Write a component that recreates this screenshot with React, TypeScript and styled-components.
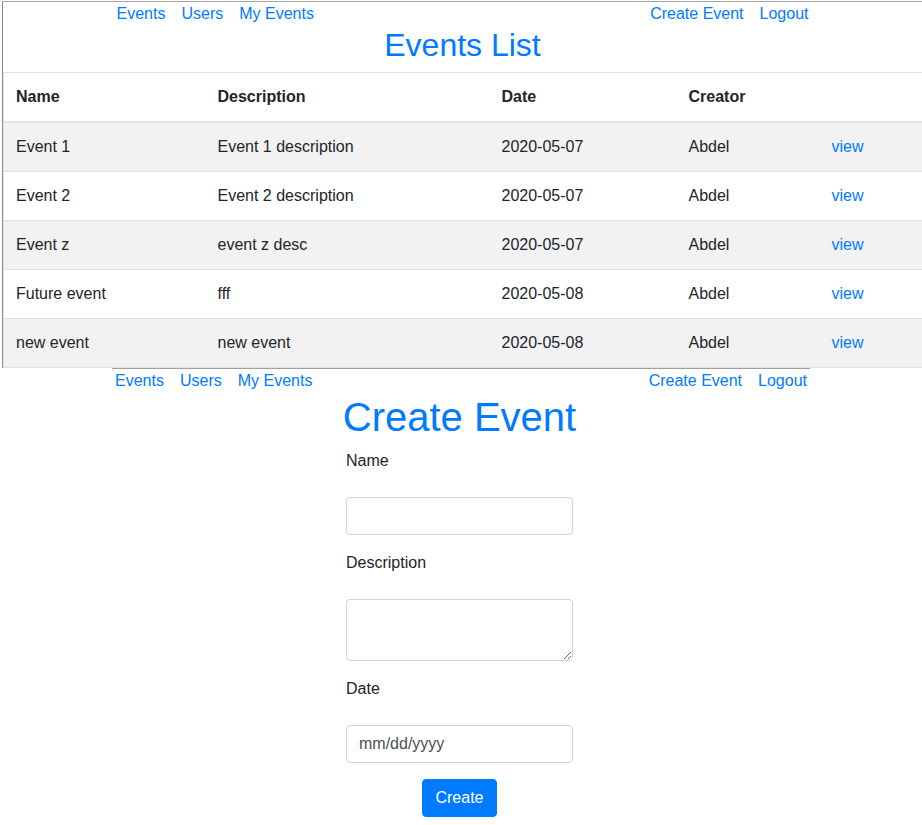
import {FC} from "react";
import styled, {createGlobalStyle} from "styled-components";

interface IEvent {
    name: string;
    description: string;
    date: string;
    creator: string;
}

const events: IEvent[] = [
    {name: 'Event 1', description: 'Event 1 description', date: '2020-05-07', creator: 'Abdel'},
    {name: 'Event 2', description: 'Event 2 description', date: '2020-05-07', creator: 'Abdel'},
    {name: 'Event z', description: 'event z desc', date: '2020-05-07', creator: 'Abdel'},
    {name: 'Future event', description: 'fff', date: '2020-05-08', creator: 'Abdel'},
    {name: 'new event', description: 'new event', date: '2020-05-08', creator: 'Abdel'},
]

const columns = [202, 284, 187, 143, 103]

const Menu: FC<{ lined?: boolean }> = ({lined}) => (
    <Nav $lined={lined}>
        <NavGroup>
            <NavLink href="#">Events</NavLink>
            <NavLink href="#">Users</NavLink>
            <NavLink href="#">My Events</NavLink>
        </NavGroup>
        <NavGroup>
            <NavLink href="#">Create Event</NavLink>
            <NavLink href="#">Logout</NavLink>
        </NavGroup>
    </Nav>
)

export default function App() {
    return (
        <>
            <GlobalStyle/>
            <Frame>
                <Menu/>
                <Title $size={32}>Events List</Title>
                <Table>
                    <colgroup>
                        {columns.map((w, i) => <col key={i} style={{width: w}}/>)}
                    </colgroup>
                    <thead>
                    <tr>
                        <Th>Name</Th>
                        <Th>Description</Th>
                        <Th>Date</Th>
                        <Th>Creator</Th>
                        <Th/>
                    </tr>
                    </thead>
                    <tbody>
                    {events.map((e, i) => (
                        <Row key={e.name} $striped={i % 2 === 0}>
                            <Td>{e.name}</Td>
                            <Td>{e.description}</Td>
                            <Td>{e.date}</Td>
                            <Td>{e.creator}</Td>
                            <Td><ViewLink href="#">view</ViewLink></Td>
                        </Row>
                    ))}
                    </tbody>
                </Table>
            </Frame>
            <Menu lined/>
            <Content>
                <Title $size={40}>Create Event</Title>
                <Form onSubmit={e => e.preventDefault()}>
                    <Field>
                        <Label htmlFor="name">Name</Label>
                        <Input id="name" type="text"/>
                    </Field>
                    <Field>
                        <Label htmlFor="description">Description</Label>
                        <TextArea id="description" rows={2}/>
                    </Field>
                    <Field>
                        <Label htmlFor="date">Date</Label>
                        <Input id="date" type="text" placeholder="mm/dd/yyyy"/>
                    </Field>
                    <Button type="submit">Create</Button>
                </Form>
            </Content>
        </>
    )
}

const GlobalStyle = createGlobalStyle`
  *, *::before, *::after {
    box-sizing: border-box;
  }

  body {
    margin: 0;
    background: #fff;
    color: #212529;
    font-family: "Liberation Sans", Arial, sans-serif;
    font-size: 16px;
    line-height: 1.5;
  }
`

const Frame = styled.div`
  margin: 1px 0 0 2px;
  border-top: 1px solid #a4a4a4;
  border-left: 1px solid #8c8c8c;
`

const Nav = styled.nav<{ $lined?: boolean }>`
  width: 698px;
  margin: 0 auto;
  padding: 0 3px;
  display: flex;
  justify-content: space-between;
  border-top: ${({$lined}) => $lined ? '1px solid #a0a0a0' : 'none'};
`

const NavGroup = styled.div`
  display: flex;
  gap: 16px;
`

const NavLink = styled.a`
  color: #007bff;
  text-decoration: none;
  line-height: 24px;
`

const Content = styled.main`
  padding-right: 3px;
`

const Title = styled.h1<{ $size: number }>`
  margin: 0 0 8px;
  text-align: center;
  color: #007bff;
  font-weight: normal;
  font-size: ${({$size}) => $size}px;
  line-height: 1.2;
`

const Table = styled.table`
  width: 100%;
  table-layout: fixed;
  border-collapse: collapse;
  border: 1px solid #dee2e6;
`

const Th = styled.th`
  padding: 12px;
  text-align: left;
  font-weight: bold;
  border-top: 1px solid #dee2e6;
  border-bottom: 2px solid #dee2e6;
`

const Row = styled.tr<{ $striped: boolean }>`
  background: ${({$striped}) => $striped ? '#f2f2f2' : '#fff'};
`

const Td = styled.td`
  padding: 12px;
  border-top: 1px solid #dee2e6;
  white-space: nowrap;
`

const ViewLink = styled.a`
  color: #007bff;
  text-decoration: none;
`

const Form = styled.form`
  width: 227px;
  margin: 0 auto;
  display: flex;
  flex-direction: column;
  align-items: center;
`

const Field = styled.div`
  width: 100%;
  margin-bottom: 16px;
  display: flex;
  flex-direction: column;
`

const Label = styled.label`
  line-height: 24px;
  margin-bottom: 24px;
`

const Input = styled.input`
  height: 38px;
  width: 100%;
  padding: 6px 12px;
  font: inherit;
  color: #495057;
  border: 1px solid #ced4da;
  border-radius: 4px;
  outline: none;

  &::placeholder {
    color: #495057;
  }
`

const TextArea = styled.textarea`
  height: 62px;
  width: 100%;
  padding: 6px 12px;
  font: inherit;
  color: #495057;
  border: 1px solid #ced4da;
  border-radius: 4px;
  outline: none;
`

const Button = styled.button`
  height: 38px;
  padding: 6px 12px;
  font: inherit;
  color: #fff;
  background: #007bff;
  border: 1px solid #007bff;
  border-radius: 4px;
  cursor: pointer;
`
